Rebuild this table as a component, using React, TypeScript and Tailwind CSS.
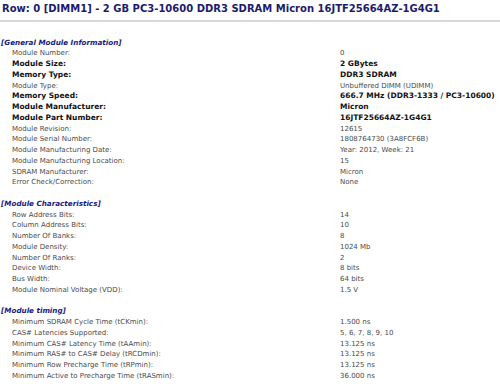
type Row = { label: string; value: string; strong?: boolean };
type Section = { title: string; rows: Row[] };

const sections: Section[] = [
  {
    title: "[General Module Information]",
    rows: [
      { label: "Module Number:", value: "0" },
      { label: "Module Size:", value: "2 GBytes", strong: true },
      { label: "Memory Type:", value: "DDR3 SDRAM", strong: true },
      { label: "Module Type:", value: "Unbuffered DIMM (UDIMM)" },
      { label: "Memory Speed:", value: "666.7 MHz (DDR3-1333 / PC3-10600)", strong: true },
      { label: "Module Manufacturer:", value: "Micron", strong: true },
      { label: "Module Part Number:", value: "16JTF25664AZ-1G4G1", strong: true },
      { label: "Module Revision:", value: "12615" },
      { label: "Module Serial Number:", value: "1808764730 (3A8FCF6B)" },
      { label: "Module Manufacturing Date:", value: "Year: 2012, Week: 21" },
      { label: "Module Manufacturing Location:", value: "15" },
      { label: "SDRAM Manufacturer:", value: "Micron" },
      { label: "Error Check/Correction:", value: "None" },
    ],
  },
  {
    title: "[Module Characteristics]",
    rows: [
      { label: "Row Address Bits:", value: "14" },
      { label: "Column Address Bits:", value: "10" },
      { label: "Number Of Banks:", value: "8" },
      { label: "Module Density:", value: "1024 Mb" },
      { label: "Number Of Ranks:", value: "2" },
      { label: "Device Width:", value: "8 bits" },
      { label: "Bus Width:", value: "64 bits" },
      { label: "Module Nominal Voltage (VDD):", value: "1.5 V" },
    ],
  },
  {
    title: "[Module timing]",
    rows: [
      { label: "Minimum SDRAM Cycle Time (tCKmin):", value: "1.500 ns" },
      { label: "CAS# Latencies Supported:", value: "5, 6, 7, 8, 9, 10" },
      { label: "Minimum CAS# Latency Time (tAAmin):", value: "13.125 ns" },
      { label: "Minimum RAS# to CAS# Delay (tRCDmin):", value: "13.125 ns" },
      { label: "Minimum Row Precharge Time (tRPmin):", value: "13.125 ns" },
      { label: "Minimum Active to Precharge Time (tRASmin):", value: "36.000 ns" },
    ],
  },
];

export default function App() {
  return (
    <div className="w-[500px] h-[384px] overflow-hidden bg-white font-['DejaVu_Sans',Verdana,sans-serif]">
      <div className="pl-[2px] pt-[3px] h-[20px] text-[10px] leading-[12px] font-bold text-[#1c1c6b] whitespace-nowrap">
        Row: 0 [DIMM1] - 2 GB PC3-10600 DDR3 SDRAM Micron 16JTF25664AZ-1G4G1
      </div>
      <div className="h-[2px] bg-[#d8d8d8]" />
      <div className="pt-[15.5px]">
        {sections.map((s, i) => (
          <div key={s.title} className={i > 0 ? "pt-[10.75px]" : ""}>
            <div className="h-[10.75px] leading-[10.75px] pl-[1px] text-[7.2px] font-bold italic text-[#1a1a80] whitespace-nowrap">
              {s.title}
            </div>
            {s.rows.map((r) => (
              <div
                key={r.label}
                className={
                  "grid grid-cols-[340px_1fr] h-[10.75px] leading-[10.75px] whitespace-nowrap " +
                  (r.strong ? "text-[7.5px] font-bold text-[#111]" : "text-[7px] text-[#4a4a4a]")
                }
              >
                <div className="pl-[12px]">{r.label}</div>
                <div>{r.value}</div>
              </div>
            ))}
          </div>
        ))}
      </div>
    </div>
  );
}
